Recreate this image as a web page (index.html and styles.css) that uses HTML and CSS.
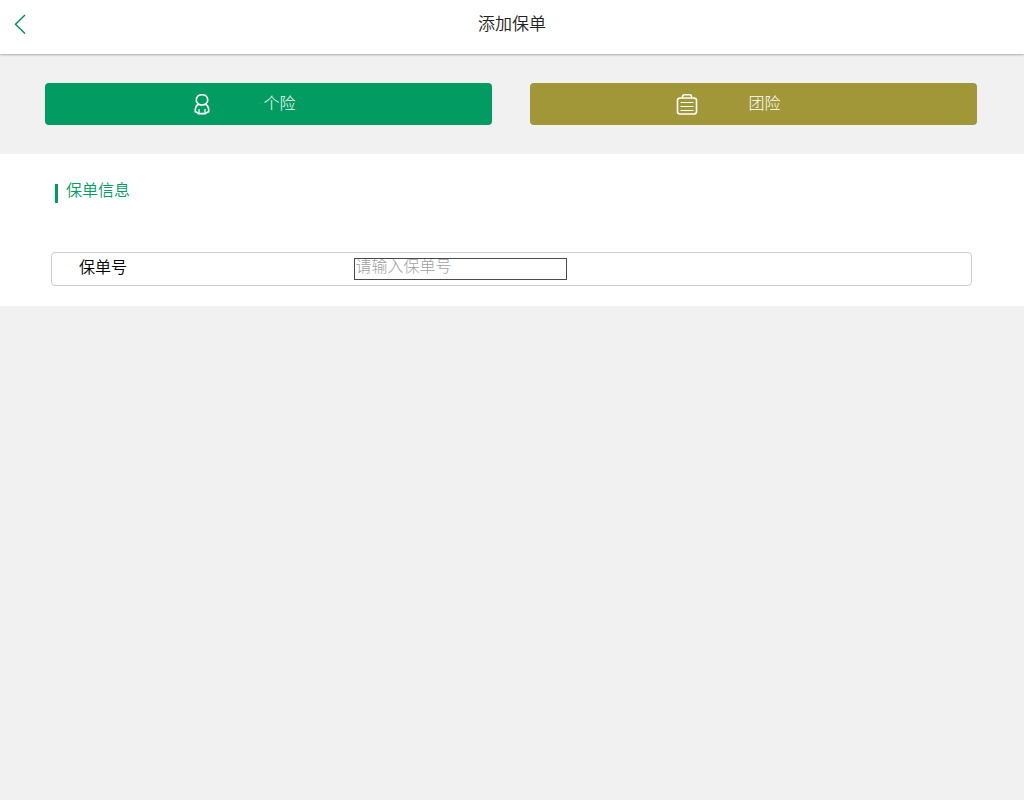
FILE: index.html
```html
<!DOCTYPE html>
<html lang="zh-CN">
<head>
<meta charset="utf-8">
<meta name="viewport" content="width=device-width, initial-scale=1">
<title>添加保单</title>
<link rel="stylesheet" href="styles.css">
</head>
<body>
<header class="topbar">
  <button class="back" type="button" aria-label="返回">
    <svg width="12" height="20" viewBox="0 0 12 20" fill="none" stroke="currentColor" stroke-width="1.5"><path d="M11 1L1.5 10.2L11 19.5"/></svg>
  </button>
  <h1 class="title">添加保单</h1>
</header>
<main>
  <div class="types">
    <button class="type personal" type="button">
      <svg class="icon" width="22" height="22" viewBox="0 0 22 22" fill="none" stroke="currentColor" stroke-width="1.6" stroke-linejoin="round"><path d="M7.500 11C4 8.500 4.500 1.800 11 1.800S18 8.500 14.500 11C17 12.500 18 15.500 17.700 18.800L15.800 19.600L14.500 20.600H7.500L6.200 19.600L4.300 18.800C4 15.500 5 12.500 7.500 11C9.500 12.200 12.500 12.200 14.500 11"/><path stroke-width="1.300" d="M8 16V20M14 16V20"/></svg>
      <span>个险</span>
    </button>
    <button class="type group" type="button">
      <svg class="icon" width="22" height="22" viewBox="0 0 22 22" fill="none" stroke="currentColor" stroke-width="1.6" stroke-linecap="round"><rect x="1.500" y="5" width="19" height="16" rx="2.500"/><path d="M6.500 4.500V3.500Q6.500 1.800 8 1.800H14Q15.500 1.800 15.500 3.500V4.500"/><path stroke-width="1.200" d="M5 9.500H17M5 13.500H17M5 17.500H17"/></svg>
      <span>团险</span>
    </button>
  </div>
  <section class="panel">
    <h2 class="heading"><span>保单信息</span></h2>
    <div class="field">
      <label class="label" for="policy">保单号</label>
      <input class="input" id="policy" type="text" placeholder="请输入保单号">
    </div>
  </section>
</main>
</body>
</html>
```
FILE: styles.css
```css
* { box-sizing: border-box; }

body {
  margin: 0;
  background: #f1f1f1;
  color: #000;
  font: 350 16px/24px "Noto Sans CJK SC", sans-serif;
}

button, input { font: inherit; }

.topbar {
  display: grid;
  grid-template-columns: 40px 1fr 40px;
  align-items: center;
  height: 54px;
  padding-bottom: 6px;
  background: #fff;
  box-shadow: 0 1px 2px #aaa;
}

.back {
  display: flex;
  padding: 0 0 0 14px;
  border: 0;
  background: none;
  color: #0b8a63;
}

.title {
  margin: 0;
  padding-bottom: 2px;
  color: #222;
  font-size: 17px;
  font-weight: 350;
  text-align: center;
}

.types {
  display: grid;
  grid-template-columns: 1fr 1fr;
  gap: 38px;
  padding: 29px 47px 29px 45px;
}

.type {
  display: grid;
  grid-template-columns: 35% 1fr;
  align-items: center;
  height: 42px;
  padding: 0;
  border: 0;
  border-radius: 4px;
  color: #fff;
  font-weight: 300;
  text-align: left;
}

.type span { padding: 0 0 4px 62px; }

.icon { justify-self: center; margin-left: 157px; }

.personal { background: #029c63; }

.group { background: #a19638; }

.panel {
  padding: 24px 52px 20px 51px;
  background: #fff;
}

.heading {
  display: flex;
  align-items: center;
  gap: 8px;
  margin: 0 0 48px;
  padding-left: 4px;
  color: #029c63;
  font-size: 16px;
  font-weight: 350;
  line-height: 22px;
}

.heading span { padding-bottom: 4px; }

.heading::before {
  width: 3px;
  height: 19px;
  margin-top: 4px;
  background: currentColor;
  content: "";
}

.field {
  display: grid;
  grid-template-columns: 30% 1fr;
  align-items: center;
  height: 34px;
  padding-left: 27px;
  border: 1px solid #ccc;
  border-radius: 4px;
}

.label { padding-bottom: 6px; }

.input {
  width: 213px;
  height: 22px;
  margin-left: 7px;
  padding: 0 1px 8px;
  border: 1px solid #4a4a4a;
  border-radius: 0;
  background: transparent;
}

.input::placeholder { color: #a0a0a0; font-weight: 300; }
```
